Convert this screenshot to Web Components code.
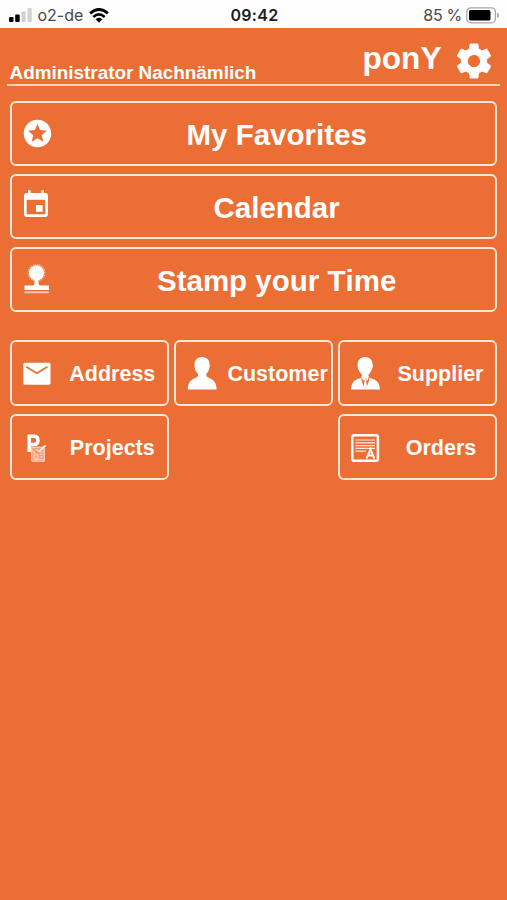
<!DOCTYPE html>
<html lang="en">
<head>
<meta charset="utf-8">
<title>ponY</title>
<style>
html,body{margin:0;height:100%;background:#eb6e35}
</style>
</head>
<body>
<pony-app></pony-app>
<script>
const define = (name, html) => customElements.define(name, class extends HTMLElement {
  constructor() {
    super();
    const t = document.createElement('template');
    t.innerHTML = html;
    this.attachShadow({mode: 'open'}).append(t.content.cloneNode(true));
  }
});

define('status-bar', `
<style>
:host{display:grid;grid-template-columns:1fr auto 1fr;align-items:center;height:28px;box-sizing:border-box;padding:2px 7px 0 9px;background:#fefefe;color:#48484a;font:16px/24px Inter,"Liberation Sans",sans-serif}
.l,.r{display:flex;align-items:center}
.r{justify-content:flex-end}
.time{color:#1c1c1e;font-weight:600;font-size:16px;letter-spacing:.3px}
.c{margin-left:5.5px;letter-spacing:0}
.p{letter-spacing:-.3px}
svg{display:block;flex:none}
.w{margin-left:6px}
.b{margin-left:4px}
</style>
<div class="l">
<svg width="23" height="15" viewBox="0 0 23 15"><rect x="0" y="9" width="4.5" height="5" rx="1" fill="#000"/><rect x="6.2" y="6.5" width="4.5" height="7.5" rx="1" fill="#000"/><rect x="12.4" y="3.5" width="4.3" height="10.5" rx="1" fill="#d2d2d2"/><rect x="18.5" y="0" width="4.3" height="14" rx="1" fill="#d2d2d2"/></svg>
<span class="c">o2-de</span>
<svg class="w" width="20" height="15" viewBox="0 0 20 15" fill="none" stroke="#000"><path d="M1.1 5.4Q10-2.4 18.9 5.4" stroke-width="2.8"/><path d="M4.3 8.9Q10 3.9 15.7 8.9" stroke-width="2.6"/><path d="M6.7 11.2Q10 8.4 13.3 11.2L10 14.7Z" fill="#000" stroke="none"/></svg>
</div>
<span class="time">09:42</span>
<div class="r"><span class="p">85 %</span>
<svg class="b" width="34" height="17" viewBox="0 0 34 17"><rect x=".8" y=".8" width="28.6" height="15" rx="4" fill="none" stroke="#a6a6a8" stroke-width="1.3"/><rect x="3" y="3.1" width="21.5" height="10.4" rx="1.6" fill="#000"/><path d="M31 5.5q2 .7 2 2.8t-2 2.8z" fill="#a6a6a8"/></svg></div>`);

define('app-header', `
<style>
:host{display:flex;justify-content:space-between;align-items:flex-end;height:57.5px;box-sizing:border-box;margin:0 7px;border-bottom:2px solid #fbd3bd;padding:0 7px 0 2.5px}
.user{font-size:18.9px;line-height:22px;height:22px}
.brand{display:flex;align-items:center;gap:10px;height:44px}
.name{display:block;font-size:31.6px;line-height:36px;margin-top:-8px;margin-right:8.500px}
svg{display:block;width:42px;height:42px;margin:-1px -2px 0 -7px}
</style>
<slot class="user" name="user"></slot>
<div class="brand"><div class="name"><slot></slot></div>
<svg viewBox="0 0 24 24" fill="#fff"><path d="M19.43 12.98c.04-.32.07-.64.07-.98s-.03-.66-.07-.98l2.11-1.65c.19-.15.24-.42.12-.64l-2-3.46c-.12-.22-.39-.3-.61-.22l-2.49 1c-.52-.4-1.08-.73-1.69-.98l-.38-2.65C14.46 2.18 14.25 2 14 2h-4c-.25 0-.46.18-.49.42l-.38 2.65c-.61.25-1.17.59-1.69.98l-2.49-1c-.23-.09-.49 0-.61.22l-2 3.46c-.13.22-.07.49.12.64l2.11 1.65c-.04.32-.07.65-.07.98s.03.66.07.98l-2.11 1.65c-.19.15-.24.42-.12.64l2 3.46c.12.22.39.3.61.22l2.49-1c.52.4 1.08.73 1.69.98l.38 2.65c.03.24.24.42.49.42h4c.25 0 .46-.18.49-.42l.38-2.65c.61-.25 1.17-.59 1.69-.98l2.49 1c.23.09.49 0 .61-.22l2-3.46c.12-.22.07-.49-.12-.64l-2.11-1.65zM12 15.5c-1.93 0-3.5-1.57-3.5-3.5s1.57-3.5 3.5-3.5 3.5 1.57 3.5 3.5-1.57 3.5-3.5 3.5z"/></svg></div>`);

define('wide-button', `
<style>
:host{display:grid;grid-template-columns:34px 1fr;align-items:center;box-sizing:border-box;height:65px;border:2px solid #ffe6d6;border-radius:6px;padding:2px 0 0 10px;font-size:29.5px}
.t{text-align:center;margin-left:2px;line-height:34px}
::slotted(svg){display:block}
</style>
<slot name="icon"></slot><span class="t"><slot></slot></span>`);

define('tile-button', `
<style>
:host{display:grid;grid-template-columns:30px 1fr;align-items:center;box-sizing:border-box;height:66px;border:2px solid #ffe6d6;border-radius:6px;padding:1px 0 0 10px;font-size:21.5px;min-width:0}
.t{justify-self:center;margin-left:var(--shift,5px);line-height:26px;white-space:nowrap}
::slotted(svg){display:block}
</style>
<slot name="icon"></slot><span class="t"><slot></slot></span>`);

define('pony-app', `
<style>
:host{display:block;width:507px;height:900px;background:#eb6e35;color:#fff;font-family:"Liberation Sans",Arial,sans-serif;font-weight:700;font-kerning:none}
.wide{display:grid;gap:8px;padding:15.5px 10px 0 10.3px}
.tiles{display:grid;grid-template-columns:repeat(3,159px);justify-content:space-between;row-gap:8px;padding:28px 10px 0 10.3px}
.last{grid-column:3}
</style>
<status-bar></status-bar>
<app-header><span slot="user">Administrator Nachnämlich</span>ponY</app-header>
<div class="wide">
<wide-button><svg slot="icon" width="33" height="33" viewBox="0 0 24 24" style="margin:-2px 0 0 -1.500px" fill="#fff"><path fill-rule="evenodd" d="M11.99 2C6.47 2 2 6.48 2 12s4.47 10 9.99 10C17.52 22 22 17.52 22 12S17.52 2 11.99 2zm4.24 16L12 15.45 7.77 18l1.12-4.81-3.73-3.23 4.92-.42L12 5l1.92 4.53 4.92.42-3.73 3.23L16.23 18z"/></svg>My Favorites</wide-button>
<wide-button><svg slot="icon" width="32" height="32" viewBox="0 0 24 24" style="margin:-5px 0 0 -2.500px" fill="#fff"><path d="M17 12h-5v5h5v-5zM16 1v2H8V1H6v2H5c-1.11 0-1.99.9-1.99 2L3 19c0 1.1.89 2 2 2h14c1.1 0 2-.9 2-2V5c0-1.1-.9-2-2-2h-1V1h-2zm3 18H5V8h14v11z"/></svg>Calendar</wide-button>
<wide-button><svg slot="icon" width="30" height="32" viewBox="0 0 30 32" style="margin-top:-4px" fill="#fff"><circle cx="14.5" cy="9.8" r="7.6"/><circle cx="14.5" cy="9.8" r="8.3" fill="none" stroke="#fff" stroke-opacity=".55" stroke-width="1.2" stroke-dasharray="1.2 1"/><path d="M12.500 16h4v4q0 2.500 2.500 2.500h8V27h-24.500v-4.500H10q2.500 0 2.500-2.500z"/><path d="M2.500 28.300h24.500v2h-24.500z" fill-opacity=".6"/></svg>Stamp your Time</wide-button>
</div>
<div class="tiles">
<tile-button><svg slot="icon" width="30" height="30" viewBox="0 0 30 30"><rect x="1.3" y="3.7" width="27.2" height="22" rx="1.5" fill="#fff"/><path d="M4.2 7.8L14.9 14.3 25.5 7.8" fill="none" stroke="#eb6e35" stroke-width="1.8"/></svg>Address</tile-button>
<tile-button style="--shift:8px"><svg slot="icon" width="30" height="34" viewBox="0 0 30 34" style="margin:-2px 0 0 .500px" fill="#fff"><path d="M15 1c5 0 8 3.500 7.700 8.500 0 4-1.500 6.500-3.300 8.200v2C20.500 23 29.500 21.500 29.700 33.500H.8C1 21.500 10 23 11 19.700v-2C9 16 7.500 13.500 7.500 9.500 7.200 4.500 10 1 15 1z"/></svg>Customer</tile-button>
<tile-button style="--shift:6px"><svg slot="icon" width="31" height="34" viewBox="0 0 31 34" style="margin-top:-2px" fill="#fff"><path d="M15 1c5 0 7.800 3.500 7.800 8.500 0 4-2.500 7-4.500 9.500l1.200 3c4.500 1.500 10 2 10.500 11.500H1C1.500 24 6.500 23.500 11 22l1.200-3C10 16.500 7.500 13.500 7.500 9.500 7.500 4.500 10 1 15 1z"/><path d="M11.800 20.800L15.300 22.600 18.800 20.800 19.300 24 16.300 32.300H14.300L11.300 24z" fill="#eb6e35"/><path d="M12 20.300l3 2.200-2.200 2.200zM18.600 20.300l-3 2.200 2.200 2.200zM14 22.500h2.600l-.5 2.500 1 5.700-1.800 2-1.800-2 1-5.700z"/></svg>Supplier</tile-button>
<tile-button><svg slot="icon" width="30" height="32" viewBox="0 0 30 32" fill="none" stroke="#fff"><path d="M7.200 20V4.300H12q4 0 4 4.100T12 12.500H7.200" stroke-width="3.400"/><path d="M9.700 15.200h12.600v14H9.700z" fill="#f2a27b" stroke="#ffe2d2" stroke-width="1"/><path d="M12 18h4v3h-4zM12 23h4v3h-4zM18 20h2.500M18 22.500h2.500M18 25h2.500M12 27.500h8.500" stroke-width=".8" stroke="#ffe2d2"/><path d="M12 17.500l3 3.500 8-6.500" stroke="#eb6e35" stroke-width=".9"/><path d="M16.500 20l7.300-6.800" stroke-width="1.500"/></svg>Projects</tile-button>
<tile-button class="last" style="--shift:7px"><svg slot="icon" width="31" height="32" viewBox="0 0 31 32" fill="none" stroke="#fff"><rect x="2.300" y="3.300" width="25.600" height="25.400" rx="1.800" stroke-width="2.500"/><path d="M5.500 8h19.500M5.500 10.800h19.500M5.500 13.600h19.500M5.500 16.400h19.500M5.500 19.200H16" stroke-width="1.200" stroke-opacity=".85"/><path d="M16.500 26.500L20.400 17.500 24.300 26.500M18 23.500h4.800" stroke-width="1.900"/></svg>Orders</tile-button>
</div>`);
</script>
</body>
</html>
